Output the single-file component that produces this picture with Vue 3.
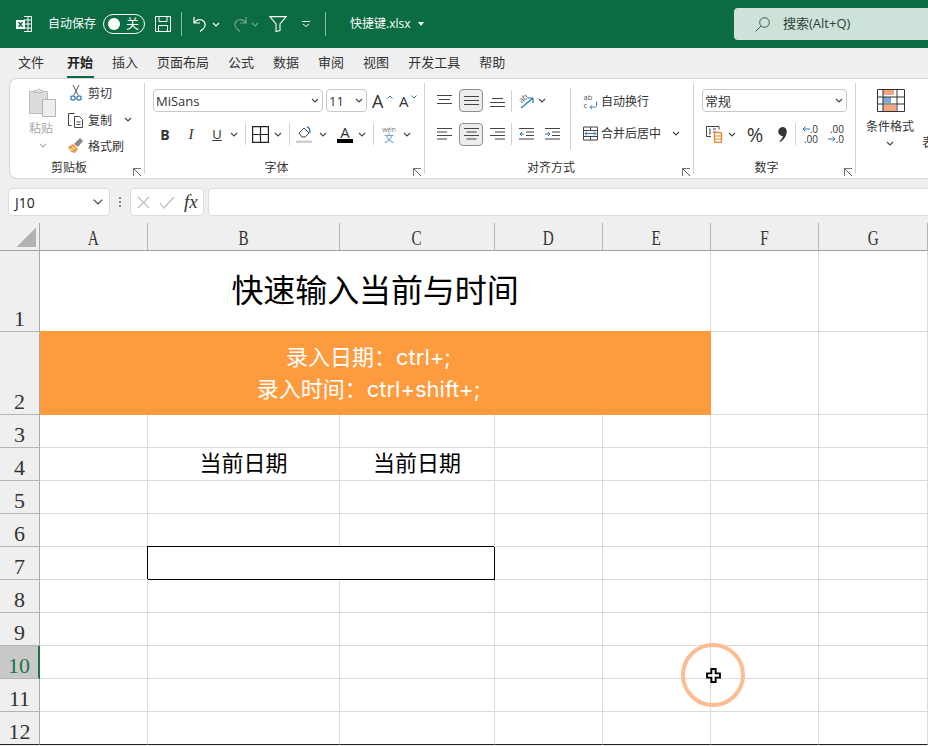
<template>
  <div class="app">
    <header class="titlebar">
      <svg class="xl-icon" viewBox="0 0 16 18" fill="none">
        <path d="M8 1.5h7.5v15H8M8 5h7.5M8 9h7.5M8 13h7.5M12 1.5v15" stroke="#fff" />
        <rect x="0" y="5" width="9" height="9" fill="#fff" />
        <path d="M2.5 7l4 5M6.5 7l-4 5" stroke="#0b6b41" stroke-width="1.4" />
      </svg>
      <span class="autosave">自动保存</span>
      <div class="toggle"><span class="knob"></span><span class="off">关</span></div>
      <svg class="qat save" viewBox="0 0 16 16" fill="none" stroke="#fff">
        <path d="M.5.5h15v15H.5zM4 .5v5h8v-5M3.5 15.5v-6h9v6" />
      </svg>
      <span class="title-sep"></span>
      <svg class="qat undo" viewBox="0 0 16 16" fill="none" stroke="#fff" stroke-width="1.2">
        <path d="M2 1v6h6M2 7c2-3 5-4 8-3 4 2 4 7 1 9l-3 2.500" />
      </svg>
      <svg class="caret white undo-caret" viewBox="0 0 8 5"><path d="M1 1l3 3 3-3" /></svg>
      <svg class="qat redo" viewBox="0 0 16 16" fill="none" stroke="#6fa68c" stroke-width="1.2">
        <path d="M14 1v6H8M14 7c-2-3-5-4-8-3-4 2-4 7-1 9l3 2.500" />
      </svg>
      <svg class="caret dim redo-caret" viewBox="0 0 8 5"><path d="M1 1l3 3 3-3" /></svg>
      <svg class="qat filter" viewBox="0 0 18 16" fill="none" stroke="#fff" stroke-width="1.1">
        <path d="M.8.6h16.400L11 8v6.500l-4 1V8z" />
      </svg>
      <svg class="qat more" viewBox="0 0 8 6" fill="none" stroke="#fff">
        <path d="M0 .5h8M1 3l3 2.500L7 3" />
      </svg>
      <span class="title-sep second"></span>
      <span class="filename">快捷键.xlsx</span>
      <span class="file-caret"></span>
      <div class="search">
        <svg class="search-icon" viewBox="0 0 15 15" fill="none" stroke="#3c5a4c">
          <circle cx="9.500" cy="5.500" r="4.800" /><path d="M6 9l-5.500 5.500" />
        </svg>
        <span class="search-text">搜索(Alt+Q)</span>
      </div>
    </header>

    <nav class="tabs">
      <span v-for="tab in tabs" :key="tab" :class="['tab', { active: tab === '开始' }]">{{ tab }}</span>
    </nav>

    <section class="ribbon">
      <!-- 剪贴板 -->
      <div class="group clipboard">
        <div class="main">
          <div class="paste">
            <svg class="paste-icon" viewBox="0 0 27 29">
              <path d="M.5 3.500h18v22H.5z" fill="#dcdcdc" stroke="#bdbdbd" />
              <path d="M5.500 4.500v-2h3a1.500 1.500 0 0 1 3 0h2v2z" fill="#e8e8e8" stroke="#bdbdbd" />
              <path d="M13.500 11.500h13v17h-13z" fill="#eeeeee" stroke="#b5b5b5" />
            </svg>
            <span>粘贴</span>
            <svg class="caret light" viewBox="0 0 8 5"><path d="M1 1l3 3 3-3" /></svg>
          </div>
          <div class="clip-list">
            <div class="clip-row">
              <svg class="clip-icon" viewBox="0 0 16 16" fill="none">
                <path d="M5 0l5 10M11 0L6 10" stroke="#555" />
                <circle cx="5" cy="13" r="2.200" stroke="#2e75b6" stroke-width="1.200" />
                <circle cx="11" cy="13" r="2.200" stroke="#2e75b6" stroke-width="1.200" />
              </svg>
              <span>剪切</span>
            </div>
            <div class="clip-row">
              <svg class="clip-icon" viewBox="0 0 16 16" fill="none" stroke="#444">
                <path d="M3.500 13.500H.5v-12h6M6.500 4.500h5l3 3v8h-8zM8.500 10h4M8.500 12.500h4" />
              </svg>
              <span>复制</span>
              <svg class="caret copy-caret" viewBox="0 0 8 5"><path d="M1 1l3 3 3-3" /></svg>
            </div>
            <div class="clip-row">
              <svg class="clip-icon" viewBox="0 0 16 16">
                <path d="M0 9l5-3 5 5-3 4c-3 0-6-3-7-6z" fill="#ed9a3c" />
                <path d="M6 6l6-6 3 3-5 6z" fill="#8a8a8a" />
                <path d="M2 11l3 1M4 9l3 2" stroke="#fff" />
              </svg>
              <span>格式刷</span>
            </div>
          </div>
        </div>
        <div class="group-label">剪贴板</div>
        <span class="launcher"></span>
      </div>

      <!-- 字体 -->
      <div class="group font">
        <div class="row first">
          <div class="combo font-name"><span>MiSans</span><svg class="caret" viewBox="0 0 8 5"><path d="M1 1l3 3 3-3" /></svg></div>
          <div class="combo font-size"><span>11</span><svg class="caret" viewBox="0 0 8 5"><path d="M1 1l3 3 3-3" /></svg></div>
          <span class="grow-a big">A<svg class="tiny" viewBox="0 0 6 4" fill="none" stroke="#2e75b6"><path d="M.5 3.500L3 1l2.500 2.500" /></svg></span>
          <span class="grow-a small">A<svg class="tiny" viewBox="0 0 6 4" fill="none" stroke="#2e75b6"><path d="M.5.5L3 3 5.500.5" /></svg></span>
        </div>
        <div class="row second-row">
          <span class="letter bold">B</span>
          <span class="letter italic">I</span>
          <span class="letter under">U</span>
          <svg class="caret gap-l" viewBox="0 0 8 5"><path d="M1 1l3 3 3-3" /></svg>
          <span class="vsep"></span>
          <svg class="icon17" viewBox="0 0 17 17" fill="none" stroke="#222" stroke-width="1.200"><path d="M.6.600h15.800v15.800H.6zM8.500.600v15.800M.6 8.500h15.800" /></svg>
          <svg class="caret gap-s" viewBox="0 0 8 5"><path d="M1 1l3 3 3-3" /></svg>
          <span class="vsep"></span>
          <svg class="icon16" viewBox="0 0 16 17" fill="none">
            <path d="M3 7l5-5 5 5-4 4H6z" stroke="#444" />
            <path d="M11 1c3 0 3 3 3 6" stroke="#2e75b6" stroke-width="1.400" />
            <path d="M0 14.500h16V17H0z" fill="#cfcfcf" />
          </svg>
          <svg class="caret gap-m" viewBox="0 0 8 5"><path d="M1 1l3 3 3-3" /></svg>
          <span class="color-a">A</span>
          <svg class="caret gap-s" viewBox="0 0 8 5"><path d="M1 1l3 3 3-3" /></svg>
          <span class="vsep"></span>
          <span class="wen"><span>wén</span><b>文</b></span>
          <svg class="caret gap-m" viewBox="0 0 8 5"><path d="M1 1l3 3 3-3" /></svg>
        </div>
        <div class="group-label">字体</div>
        <span class="launcher"></span>
      </div>

      <!-- 对齐方式 -->
      <div class="group align">
        <div class="align-main">
          <div class="align-left">
            <div class="row first">
              <span class="al-btn"><svg viewBox="0 0 15 12" fill="none" stroke="#444"><path d="M0 .5h15M2 4.500h11M0 8.500h15" /></svg></span>
              <span class="al-btn on"><svg viewBox="0 0 15 12" fill="none" stroke="#444"><path d="M0 1.500h15M0 5.500h15M0 9.500h15" /></svg></span>
              <span class="al-btn"><svg viewBox="0 0 15 12" fill="none" stroke="#444"><path d="M2 3.500h11M0 7.500h15M0 11.500h15" /></svg></span>
              <span class="vsep"></span>
              <svg class="orient" viewBox="0 0 17 16" fill="none">
                <path d="M3 15L15 5M15 5h-5M15 5v5" stroke="#2e75b6" stroke-width="1.200" />
                <text x="1" y="10" transform="rotate(-40 3 7)" class="orient-text">ab</text>
              </svg>
              <svg class="caret orient-caret" viewBox="0 0 8 5"><path d="M1 1l3 3 3-3" /></svg>
            </div>
            <div class="row second-row">
              <span class="al-btn"><svg viewBox="0 0 15 12" fill="none" stroke="#444"><path d="M0 .5h15M0 4h10M0 7.500h15M0 11h10" /></svg></span>
              <span class="al-btn on"><svg viewBox="0 0 15 12" fill="none" stroke="#444"><path d="M0 .5h15M2.500 4h10M0 7.500h15M2.500 11h10" /></svg></span>
              <span class="al-btn"><svg viewBox="0 0 15 12" fill="none" stroke="#444"><path d="M0 .5h15M5 4h10M0 7.500h15M5 11h10" /></svg></span>
              <span class="vsep"></span>
              <svg class="indent" viewBox="0 0 15 12" fill="none" stroke="#444">
                <path d="M0 .5h15M7 4h8M7 7.500h8M0 11h15" />
                <path d="M5 6H1M3 4L1 6l2 2" stroke="#2e75b6" />
              </svg>
              <svg class="indent" viewBox="0 0 15 12" fill="none" stroke="#444">
                <path d="M0 .5h15M7 4h8M7 7.500h8M0 11h15" />
                <path d="M0 6h5M3 4l2 2-2 2" stroke="#2e75b6" />
              </svg>
            </div>
          </div>
          <span class="vsep tall"></span>
          <div class="align-right">
            <div class="wrap-row">
              <svg class="wrap-icon" viewBox="0 0 15 16" fill="none">
                <text x="0" y="6.500" class="wrap-text">ab</text>
                <text x="0" y="14.500" class="wrap-text">c</text>
                <path d="M14 8v4c0 2-2 2-3 2H7M9 12l-2 2 2 2" stroke="#2e75b6" />
              </svg>
              <span>自动换行</span>
            </div>
            <div class="wrap-row merge">
              <svg class="wrap-icon" viewBox="0 0 15 14" fill="none" stroke="#444">
                <path d="M.5.500h14v13H.5zM.5 4h14M.5 10h14M7.500.500V4M7.500 10v3.500" />
                <path d="M2 7h11M4 5L2 7l2 2M11 5l2 2-2 2" stroke="#2e75b6" />
              </svg>
              <span>合并后居中</span>
              <svg class="caret merge-caret" viewBox="0 0 8 5"><path d="M1 1l3 3 3-3" /></svg>
            </div>
          </div>
        </div>
        <div class="group-label">对齐方式</div>
        <span class="launcher"></span>
      </div>

      <!-- 数字 -->
      <div class="group number">
        <div class="row first">
          <div class="combo num-format"><span>常规</span><svg class="caret" viewBox="0 0 8 5"><path d="M1 1l3 3 3-3" /></svg></div>
        </div>
        <div class="row second-row">
          <svg class="account" viewBox="0 0 17 17" fill="none">
            <path d="M13 3.500V.5H.5v10H5" stroke="#444" />
            <path d="M3 3h1v5H3M7 3h3M7 6h3" stroke="#444" />
            <rect x="8.500" y="6.500" width="7" height="10" rx="1.500" fill="#fff" stroke="#e08a2c" stroke-width="1.400" />
            <path d="M9 10h6M9 13h6" stroke="#e08a2c" />
          </svg>
          <svg class="caret gap-s" viewBox="0 0 8 5"><path d="M1 1l3 3 3-3" /></svg>
          <span class="percent">%</span>
          <svg class="comma" viewBox="0 0 9 15"><path d="M4.500 0a4.200 4.200 0 0 1 4.200 4.500c0 4.500-3 8.500-6.700 10.500l-.6-.8c2-1.700 3.100-3.400 3.500-5.300a4.200 4.200 0 1 1-.4-8.900z" fill="#333" /></svg>
          <span class="vsep"></span>
          <span class="dec">
            <span class="dec-line"><svg class="dec-arrow" viewBox="0 0 8 6" fill="none" stroke="#2e75b6"><path d="M8 3H1M3.500.5L1 3l2.500 2.500" /></svg>.0</span>
            <span class="dec-line">.00</span>
          </span>
          <span class="dec gap-dec">
            <span class="dec-line">.00</span>
            <span class="dec-line"><svg class="dec-arrow" viewBox="0 0 8 6" fill="none" stroke="#2e75b6"><path d="M0 3h7M4.500.5L7 3 4.500 5.500" /></svg>.0</span>
          </span>
        </div>
        <div class="group-label">数字</div>
        <span class="launcher"></span>
      </div>

      <!-- 样式 -->
      <div class="styles">
        <div class="style-item">
          <svg class="cond-icon" viewBox="0 0 28 23" fill="none">
            <path d="M6 1h11v5H6zM6 16h13v6H6z" fill="#f4a582" />
            <path d="M6 8h8v6H6z" fill="#7fa9d8" />
            <path d="M.5.500h27v22H.5zM.5 8h27M.5 15h27M6 .500v22M20 .500v22" stroke="#333" />
          </svg>
          <span>条件格式</span>
          <svg class="caret" viewBox="0 0 8 5"><path d="M1 1l3 3 3-3" /></svg>
        </div>
        <span class="next-style">表</span>
      </div>
    </section>

    <section class="formula-bar">
      <div class="name-box"><span>J10</span><svg class="name-caret" viewBox="0 0 10 6" fill="none" stroke="#444" stroke-width="1.200"><path d="M.7.700L5 5 9.300.700" /></svg></div>
      <span class="grip"></span>
      <div class="fx-box">
        <svg class="fx-mark" viewBox="0 0 13 13" fill="none" stroke="#bdbdbd" stroke-width="1.200"><path d="M1 1l11 11M12 1L1 12" /></svg>
        <svg class="fx-mark check" viewBox="0 0 16 13" fill="none" stroke="#bdbdbd" stroke-width="1.200"><path d="M1 7l4 5L15 1" /></svg>
        <span class="fx">fx</span>
      </div>
      <div class="formula-input"></div>
    </section>

    <section class="sheet">
      <div class="grid">
        <div class="corner"><span class="corner-mark"></span></div>
        <div v-for="col in columns" :key="col" class="col-head"><span>{{ col }}</span></div>
        <template v-for="row in rows" :key="row">
          <div :class="['row-head', { current: row === 10, last: row === 12 }]">{{ row }}</div>
          <div
            v-for="cell in cellsOf(row)"
            :key="cell.key"
            :class="['cell', cell.cls, { last: row === 12 }]"
          >{{ cell.text }}</div>
        </template>
      </div>
      <div class="click-ring"></div>
      <svg class="cell-cursor" viewBox="0 0 14 14">
        <path d="M5 1h4v4h4v4H9v4H5V9H1V5h4z" fill="#fff" stroke="#000" stroke-width="1.800" />
      </svg>
    </section>
  </div>
</template>

<script setup>
const tabs = ['文件', '开始', '插入', '页面布局', '公式', '数据', '审阅', '视图', '开发工具', '帮助']
const columns = ['A', 'B', 'C', 'D', 'E', 'F', 'G']
const rows = Array.from({ length: 12 }, (_, i) => i + 1)

const merged = {
  1: { span: 5, text: '快速输入当前与时间', cls: 'title span5' },
  2: { span: 5, text: '录入日期：ctrl+;\n录入时间：ctrl+shift+;', cls: 'banner span5' }
}

const cellsOf = (row) => {
  const out = []
  if (merged[row]) {
    out.push({ key: 'm', ...merged[row] })
    out.push({ key: 'F' }, { key: 'G' })
    return out
  }
  columns.forEach((col) => {
    if (row === 7 && col === 'C') return
    const cell = { key: col }
    if (row === 4 && (col === 'B' || col === 'C')) {
      cell.text = '当前日期'
      cell.cls = 'label'
    }
    if (row === 7 && col === 'B') cell.cls = 'boxed'
    out.push(cell)
  })
  return out
}
</script>

<style>
html, body {
  margin: 0;
  background: #fff;
}
</style>

<style scoped>
.app {
  width: 928px;
  height: 746px;
  overflow: hidden;
  background: #efefef;
  font-family: "Open Sans", "Noto Sans CJK SC", sans-serif;
  color: #222;
  font-size: 12px;
}

/* title bar */
.titlebar {
  height: 48px;
  background: #0b6b41;
  color: #fff;
  display: flex;
  align-items: center;
  padding-left: 16px;
}
.xl-icon { width: 16px; height: 18px; }
.autosave { margin-left: 16px; width: 48px; white-space: nowrap; padding-bottom: 3px; }
.toggle {
  margin-left: 7px;
  width: 42px;
  height: 20px;
  box-sizing: border-box;
  border: 1px solid #fff;
  border-radius: 10px;
  display: flex;
  align-items: center;
  padding-left: 4px;
  gap: 6px;
  font-size: 13px;
}
.off { padding-bottom: 4px; }
.knob { width: 12px; height: 12px; border-radius: 50%; background: #fff; }
.qat { flex: none; }
.save { width: 16px; height: 16px; margin-left: 10px; }
.title-sep { width: 1px; height: 24px; background: #8fbca6; margin-left: 10px; }
.undo { width: 16px; height: 16px; margin-left: 10px; }
.undo-caret { margin-left: 4px; }
.redo { width: 16px; height: 16px; margin-left: 12px; }
.redo-caret { margin-left: 3px; }
.filter { width: 18px; height: 16px; margin-left: 10px; }
.more { width: 8px; height: 6px; margin-left: 15px; }
.title-sep.second { margin-left: 15px; }
.filename { margin-left: 24px; width: 62px; white-space: nowrap; padding-bottom: 2px; }
.file-caret {
  margin-left: 6px;
  border: 3px solid transparent;
  border-top: 4px solid #fff;
  border-bottom: 0;
}
.search {
  margin-left: auto;
  width: 194px;
  height: 32px;
  background: #cde3d9;
  border-radius: 4px 0 0 4px;
  display: flex;
  align-items: center;
  color: #2f3f38;
  font-size: 13px;
  box-sizing: border-box;
  padding-left: 21px;
  gap: 13px;
}
.search-text { padding-bottom: 4px; }
.search-icon { width: 15px; height: 15px; }

/* tabs */
.tabs {
  height: 30px;
  box-sizing: border-box;
  display: flex;
  gap: 19px;
  padding: 0 0 4px 18px;
  align-items: center;
  font-size: 13px;
  color: #333;
}
.tab { position: relative; white-space: nowrap; }
.tab:first-child { margin-right: 4px; }
.tab.active { font-weight: 700; color: #222; }
.tab.active::after {
  content: "";
  position: absolute;
  left: 0;
  right: -1px;
  bottom: -7px;
  height: 2px;
  background: #0b6b41;
}

/* ribbon */
.ribbon {
  height: 101px;
  margin-left: 9px;
  box-sizing: border-box;
  background: #fff;
  border: 1px solid #d6d6d6;
  border-right: 0;
  border-radius: 8px 0 0 8px;
  display: flex;
  overflow: hidden;
}
.group {
  position: relative;
  flex: none;
  box-sizing: content-box;
  height: 99px;
  background: linear-gradient(#d2d2d2, #d2d2d2) right 4px / 1px 91px no-repeat;
  padding-right: 1px;
}
.group-label {
  position: absolute;
  left: 0;
  right: 17px;
  top: 81px;
  text-align: center;
  color: #333;
  line-height: 16px;
}
.launcher {
  position: absolute;
  right: 4px;
  top: 89px;
  width: 7px;
  height: 7px;
  border-left: 1px solid #777;
  border-top: 1px solid #777;
  background: linear-gradient(45deg, transparent 45%, #555 45%, #555 55%, transparent 55%);
}
.caret {
  flex: none;
  width: 8px;
  height: 5px;
  fill: none;
  stroke: #444;
  stroke-width: 1.1;
}
.caret.white { stroke: #fff; }
.caret.dim { stroke: #6fa68c; }
.caret.light { stroke: #aaa; }
.vsep { flex: none; width: 1px; height: 22px; background: #d2d2d2; }
.row { display: flex; align-items: center; }
.row.first { height: 23px; margin-top: 10px; }
.row.second-row { height: 22px; margin-top: 11px; }

/* clipboard */
.clipboard { width: 134px; }
.clipboard .main { display: flex; padding-left: 16px; }
.paste {
  width: 30px;
  display: flex;
  flex-direction: column;
  align-items: center;
  color: #a8a8a8;
  padding-top: 9px;
}
.paste-icon { width: 27px; height: 29px; margin: 0 0 2px 3px; flex: none; }
.paste .caret { margin: 6px 0 0 3px; }
.clip-list { margin-left: 12px; padding-top: 1px; }
.clip-row { height: 26.500px; display: flex; align-items: center; white-space: nowrap; color: #333; }
.clip-icon { width: 16px; height: 16px; margin-right: 4px; flex: none; }
.copy-caret { margin-left: 12px; }

/* font */
.font { padding-left: 8px; width: 271px; }
.combo {
  height: 23px;
  box-sizing: border-box;
  border: 1px solid #c9c9c9;
  border-radius: 4px;
  display: flex;
  align-items: center;
  justify-content: space-between;
  padding: 0 3px 0 2px;
  font-size: 13px;
  color: #333;
}
.font-name { width: 170px; }
.font-size { width: 41px; margin-left: 3px; }
.grow-a { position: relative; color: #333; display: inline-block; }
.grow-a.big { font-size: 18px; margin-left: 5px; width: 22px; }
.grow-a.small { font-size: 15px; margin-left: 5px; }
.tiny { position: absolute; width: 6px; height: 4px; right: 1px; top: 6px; }
.grow-a.small .tiny { right: -8px; top: 4px; }
.letter { width: 24px; text-align: center; font-size: 14px; color: #333; flex: none; }
.letter.bold { font-weight: 700; }
.letter.italic { font-family: "Liberation Serif", serif; font-style: italic; margin-left: 2px; font-size: 15px; }
.letter.under { margin-left: 2px; text-decoration: underline; font-size: 13px; }
.gap-l { margin: 0 7px 0 1px; }
.second-row .vsep + svg, .second-row .vsep + span { margin-left: 6px; }
.icon17 { width: 17px; height: 17px; flex: none; }
.icon16 { width: 16px; height: 17px; flex: none; }
.gap-s { margin: 0 7px 0 5px; }
.gap-m { margin: 0 10px 0 7px; }
.color-a {
  width: 16px;
  text-align: center;
  font-size: 15px;
  line-height: 14px;
  border-bottom: 4px solid #000;
  color: #333;
}
.wen {
  width: 14px;
  display: flex;
  flex-direction: column;
  align-items: center;
  color: #5a9bd5;
  line-height: 9px;
  font-size: 7px;
}
.second-row .vsep + .wen { margin-left: 8px; }
.wen span { color: #777; }
.wen b { font-weight: 400; font-size: 10px; }

/* align */
.align { width: 268px; }
.align-main { display: flex; }
.align-left { width: 137px; padding-left: 8px; }
.al-btn {
  flex: none;
  width: 24px;
  height: 23px;
  margin-right: 2px;
  box-sizing: border-box;
  border-radius: 4px;
  border: 1px solid transparent;
  display: flex;
  align-items: center;
  justify-content: center;
}
.al-btn:first-child { width: 22px; margin-right: 4px; }
.al-btn.on { background: #ededed; border-color: #8f8f8f; }
.al-btn svg { width: 15px; height: 12px; }
.indent { width: 15px; height: 12px; flex: none; margin-right: 4px; }
.second-row .vsep + svg.indent, .second-row svg.indent { margin-left: 7px; }
.orient { width: 17px; height: 16px; margin-left: 6px; flex: none; overflow: visible; }
.orient-text { font-size: 8px; fill: #555; }
.orient-caret { margin-left: 3px; }
.vsep.tall { height: 62px; margin-top: 9px; }
.align-right { padding-left: 12px; padding-top: 12px; }
.wrap-row { display: flex; align-items: center; white-space: nowrap; height: 20px; color: #333; }
.wrap-row.merge { margin-top: 12px; }
.wrap-icon { width: 15px; height: 15px; margin-right: 3px; flex: none; overflow: visible; }
.wrap-text { font-size: 8px; fill: #555; }
.merge-caret { margin-left: 11px; }

/* number */
.number { width: 153px; padding-left: 8px; }
.num-format { width: 145px; }
.account { width: 17px; height: 17px; margin-left: 4px; flex: none; }
.percent { font-size: 20px; color: #333; margin-left: 3px; width: 18px; text-align: center; }
.comma { width: 9px; height: 15px; margin: 0 8px 0 14px; flex: none; }
.dec {
  display: flex;
  flex-direction: column;
  line-height: 10px;
  font-size: 10px;
  align-items: flex-end;
  width: 16px;
  color: #333;
  flex: none;
}
.dec-line { white-space: nowrap; display: flex; align-items: center; }
.dec-arrow { width: 8px; height: 6px; }
.gap-dec { margin-left: 10px; }

/* styles */
.styles { display: flex; }
.style-item {
  width: 58px;
  margin-left: 0;
  padding-left: 5px;
  padding-top: 10px;
  display: flex;
  flex-direction: column;
  align-items: center;
  color: #333;
  white-space: nowrap;
}
.cond-icon { width: 28px; height: 23px; margin-left: 2px; flex: none; }
.style-item span { margin-top: 6px; line-height: 17px; }
.style-item .caret { margin-top: 6px; }
.next-style { margin-left: 3px; padding-top: 54px; color: #333; }

/* formula bar */
.formula-bar {
  height: 28px;
  margin-top: 9px;
  display: flex;
  padding-left: 8px;
}
.name-box, .fx-box, .formula-input {
  box-sizing: border-box;
  height: 28px;
  background: #fff;
  border: 1px solid #dcdcdc;
  border-radius: 4px;
}
.name-box {
  width: 102px;
  display: flex;
  align-items: center;
  justify-content: space-between;
  padding: 0 6px;
  font-size: 14px;
  color: #222;
}
.name-caret { width: 10px; height: 6px; }
.grip {
  width: 2px;
  height: 10px;
  margin: 9px 9px 0;
  background: repeating-linear-gradient(#888 0 2px, transparent 2px 4px);
}
.fx-box {
  width: 74px;
  display: flex;
  align-items: center;
  padding-left: 6px;
}
.fx-mark { width: 13px; height: 13px; flex: none; }
.fx-mark.check { width: 16px; margin-left: 9px; }
.fx {
  margin-left: 9px;
  font-family: "Liberation Serif", serif;
  font-style: italic;
  font-size: 19px;
  line-height: 20px;
  color: #333;
}
.formula-input { flex: 1; margin-left: 4px; border-right: 0; border-radius: 4px 0 0 4px; }

/* sheet */
.sheet { position: relative; margin-top: 7px; }
.grid {
  display: grid;
  grid-template-columns: 40px 108px 192px 155px 108px 108px 108px 109px;
  grid-template-rows: 28px 81px 83px repeat(10, 33px);
  background: #fff;
}
.corner {
  background: #efefef;
  border-right: 1px solid #a8a8a8;
  border-bottom: 1px solid #a0a0a0;
  box-sizing: border-box;
  display: flex;
  align-items: flex-end;
  justify-content: flex-end;
  padding: 0 3px 3px 0;
}
.corner-mark {
  width: 20px;
  height: 20px;
  background: linear-gradient(135deg, transparent 50%, #b2b2b2 50%);
}
.col-head {
  background: #efefef;
  border-right: 1px solid #b4b4b4;
  border-bottom: 1px solid #a0a0a0;
  box-sizing: border-box;
  text-align: center;
  font-family: "Liberation Serif", serif;
  font-size: 20px;
  line-height: 30px;
  color: #333;
}
.col-head span { display: inline-block; transform: scaleX(0.76); }
.row-head {
  background: #efefef;
  border-right: 1px solid #a8a8a8;
  border-bottom: 1px solid #b4b4b4;
  box-sizing: border-box;
  display: flex;
  align-items: flex-end;
  justify-content: center;
  font-family: "Liberation Serif", serif;
  font-size: 22px;
  line-height: 24px;
  color: #333;
}
.row-head.current {
  background: #c9c9c9;
  color: #217346;
  border-right: 2px solid #217346;
}
.cell {
  border-right: 1px solid #dadada;
  border-bottom: 1px solid #dadada;
  box-sizing: border-box;
  color: #000;
  font-family: Inter, "Noto Sans CJK SC", sans-serif;
}
.row-head.last, .cell.last { border-bottom-color: #222; }
.span5 { grid-column: span 5; }
.title {
  display: flex;
  align-items: center;
  justify-content: center;
  font-size: 32px;
  padding-bottom: 7px;
  letter-spacing: -0.100px;
}
.banner {
  background: #ff9b3f;
  box-shadow: 0 -1px 0 #ff9b3f;
  color: #fff;
  border: 0;
  white-space: pre-line;
  text-align: center;
  font-size: 22px;
  line-height: 32px;
  padding: 9px 14px 0 0;
}
.label {
  font-size: 22px;
  text-align: center;
  line-height: 30px;
}
.boxed {
  grid-column: span 2;
  border-right-color: #000;
  border-bottom-color: #000;
  box-shadow: -1px -1px 0 #000;
}
.click-ring {
  position: absolute;
  left: 681px;
  top: 420px;
  width: 64px;
  height: 64px;
  box-sizing: border-box;
  border: 4.500px solid #fbbd94;
  border-radius: 50%;
}
.cell-cursor {
  position: absolute;
  left: 706px;
  top: 445px;
  width: 15px;
  height: 15px;
}
</style>
